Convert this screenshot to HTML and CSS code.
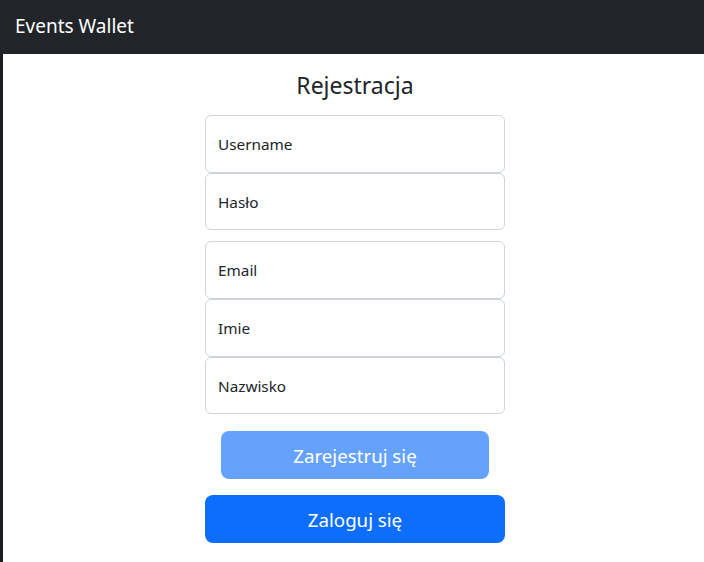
FILE: index.html
```html
<!DOCTYPE html>
<html lang="pl">
<head>
<meta charset="utf-8">
<title>Events Wallet</title>
<link rel="stylesheet" href="styles.css">
</head>
<body>
<div class="page">
  <nav class="navbar"><span class="brand">Events Wallet</span></nav>
  <main class="content">
    <h3 class="title">Rejestracja</h3>
    <form class="form">
      <div class="group">
        <div class="field"><span>Username</span></div>
        <div class="field"><span>Hasło</span></div>
      </div>
      <div class="group">
        <div class="field"><span>Email</span></div>
        <div class="field"><span>Imie</span></div>
        <div class="field"><span>Nazwisko</span></div>
      </div>
      <button type="button" class="btn btn-disabled">Zarejestruj się</button>
      <button type="button" class="btn btn-primary">Zaloguj się</button>
    </form>
  </main>
</div>
</body>
</html>
```
FILE: styles.css
```css
* { box-sizing: border-box; }
html, body { margin: 0; padding: 0; height: 100%; }
body {
  font-family: "Noto Sans", "Open Sans", sans-serif;
  color: #212529;
  background: #fff;
}
.page {
  min-height: 562px;
  border-left: 3px solid #1b1e21;
}
.navbar {
  height: 54px;
  background: #212529;
  display: flex;
  align-items: center;
  margin-left: -3px;
  padding-left: 15px;
}
.brand {
  color: #fff;
  font-size: 19px;
  line-height: 1;
  margin-top: -1px;
}
.content {
  display: flex;
  flex-direction: column;
  align-items: center;
  padding-left: 3px;
}
.title {
  margin: 16px 0 0 0;
  font-weight: 400;
  font-size: 23px;
  line-height: 30px;
  height: 45px;
}
.form {
  width: 300px;
  display: flex;
  flex-direction: column;
  align-items: center;
}
.group {
  width: 300px;
  display: flex;
  flex-direction: column;
  margin-bottom: 11px;
}
.group + .group { margin-bottom: 17px; }
.field {
  height: 57.7px;
  border: 1px solid #ced4da;
  border-radius: 6px;
  padding: 0 12px;
  display: flex;
  align-items: center;
  font-size: 15.3px;
  color: #212529;
}
.btn {
  height: 48px;
  border: none;
  border-radius: 8px;
  color: #fff;
  font-family: inherit;
  font-size: 18.7px;
}
.btn-disabled {
  width: 268px;
  background: #64a2fe;
  margin-bottom: 16px;
}
.btn-primary {
  width: 300px;
  background: #0d6efd;
}
```
